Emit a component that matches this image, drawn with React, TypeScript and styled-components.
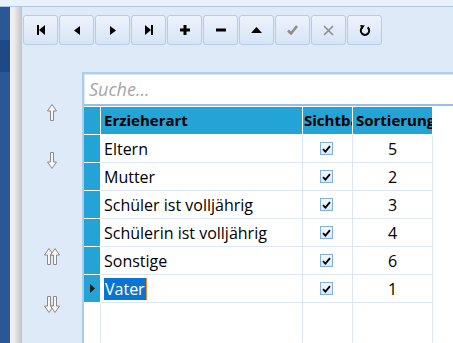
import React from "react"
import styled, { createGlobalStyle } from "styled-components"

const GlobalStyle = createGlobalStyle`
  html, body {
    margin: 0;
    padding: 0;
    background: #ffffff;
  }
  body {
    font-family: "Open Sans", "Noto Sans", sans-serif;
  }
`

const Window = styled.div`
  width: 453px;
  height: 343px;
  display: flex;
  flex-direction: column;
  overflow: hidden;
`

const TitleStrip = styled.div`
  height: 6px;
  flex: none;
  background: #e9f1fb;
  border-bottom: 1px solid #a9c7e6;
`

const Body = styled.div`
  flex: 1;
  display: flex;
  min-height: 0;
`

const NavStrip = styled.div`
  width: 10px;
  flex: none;
  background: linear-gradient(
    to bottom,
    #2b5797 0,
    #2b5797 33px,
    #1f4986 33px,
    #1f4986 65px,
    #2b5797 65px
  );
`

const Shade = styled.div`
  width: 12px;
  flex: none;
  background: linear-gradient(to right, #f2f2f2 0, #ececec 35%, #c3c3c3 100%);
`

const Panel = styled.div`
  flex: 1;
  display: flex;
  flex-direction: column;
  background: #dfeaf9;
  min-width: 0;
`

const Toolbar = styled.div`
  height: 65px;
  flex: none;
  display: flex;
  align-items: flex-start;
  gap: 1px;
  padding: 8px 0 0 1px;
  box-sizing: border-box;
`

const ToolButton = styled.button<{ $muted?: boolean }>`
  width: 35px;
  height: 30px;
  padding: 0;
  margin: 0;
  display: flex;
  align-items: center;
  justify-content: center;
  border: 1px solid #b6cce6;
  border-radius: 3px;
  background: linear-gradient(to bottom, #edf3fc 0%, #e2ecf8 50%, #d6e4f5 100%);
  color: ${(p) => (p.$muted ? "#8e8e8e" : "#000000")};
`

const Lower = styled.div`
  flex: 1;
  display: flex;
  min-height: 0;
`

const MoveColumn = styled.div`
  width: 60px;
  flex: none;
  display: flex;
  flex-direction: column;
  align-items: center;
  padding-top: 32px;
  box-sizing: border-box;
`

const MoveIcon = styled.div<{ $gap: number }>`
  height: 17px;
  margin-bottom: ${(p) => p.$gap}px;
  display: flex;
  align-items: center;
  justify-content: center;
`

const ListArea = styled.div`
  flex: 1;
  display: flex;
  flex-direction: column;
  background: #ffffff;
  border-left: 2px solid #a9cdef;
  min-width: 0;
`

const Search = styled.div`
  height: 34px;
  flex: none;
  box-sizing: border-box;
  border-top: 2px solid #aed0ef;
  border-bottom: 2px solid #98bdf0;
  box-shadow: inset 1px 1px 0 #d8e8f8;
  display: flex;
  align-items: center;
  padding-left: 5px;
  font-size: 18px;
  font-style: italic;
  color: #a6a6a6;
`

const Grid = styled.div`
  margin-top: 1px;
  flex: 1;
  display: flex;
  flex-direction: column;
`

const Row = styled.div<{ $fill?: boolean }>`
  display: flex;
  height: ${(p) => (p.$fill ? "auto" : "28px")};
  flex: ${(p) => (p.$fill ? "1" : "none")};
`

const RowHead = styled.div<{ $blank?: boolean }>`
  width: 17px;
  flex: none;
  box-sizing: border-box;
  background: ${(p) => (p.$blank ? "#ffffff" : "#24a3d6")};
  border-right: 1px solid ${(p) => (p.$blank ? "#dbe7f5" : "#ffffff")};
  border-bottom: 1px solid ${(p) => (p.$blank ? "transparent" : "#ffffff")};
  display: flex;
  align-items: center;
  justify-content: center;
`

const HeadCell = styled.div<{ $w: number; $pad: number }>`
  width: ${(p) => p.$w}px;
  flex: none;
  box-sizing: border-box;
  background: #24a3d6;
  border-right: 1px solid #ffffff;
  border-bottom: 1px solid #ffffff;
  padding-left: ${(p) => p.$pad}px;
  font-size: 15px;
  font-weight: 700;
  line-height: 27px;
  color: #000000;
  white-space: nowrap;
  overflow: hidden;
`

const Cell = styled.div<{ $w: number; $align?: string; $blank?: boolean }>`
  width: ${(p) => p.$w}px;
  flex: none;
  box-sizing: border-box;
  border-right: 1px solid #dbe7f5;
  border-bottom: 1px solid ${(p) => (p.$blank ? "transparent" : "#dbe7f5")};
  padding-left: ${(p) => (p.$align === "center" ? 0 : 3)}px;
  display: flex;
  align-items: center;
  justify-content: ${(p) => (p.$align === "center" ? "center" : "flex-start")};
  font-size: 16px;
  color: #000000;
  white-space: nowrap;
  overflow: hidden;
`

const Selected = styled.span`
  background: #0a74d4;
  color: #ffffff;
  padding: 0 1px;
  line-height: 22px;
  border-right: 1px solid #f08a24;
`

const Check = styled.span`
  width: 13px;
  height: 13px;
  box-sizing: border-box;
  border: 1px solid #7fb0de;
  background: linear-gradient(to bottom, #f2f7fd, #dbe9f8);
  display: flex;
  align-items: center;
  justify-content: center;
  margin-left: -2px;
`

const columns = [
  { label: "Erzieherart", width: 202, pad: 3 },
  { label: "Sichtbar", width: 50, pad: 1 },
  { label: "Sortierung", width: 80, pad: 3 },
]

const rows = [
  { name: "Eltern", order: 5 },
  { name: "Mutter", order: 2 },
  { name: "Schüler ist volljährig", order: 3 },
  { name: "Schülerin ist volljährig", order: 4 },
  { name: "Sonstige", order: 6 },
  { name: "Vater", order: 1, current: true },
]

const FirstIcon = () => (
  <svg width="8" height="10" viewBox="0 0 8 10">
    <rect x="0" y="0" width="2" height="10" fill="currentColor" />
    <polygon points="8,0 2,5 8,10" fill="currentColor" />
  </svg>
)

const PrevIcon = () => (
  <svg width="6" height="9" viewBox="0 0 6 9">
    <polygon points="6,0 0,4.5 6,9" fill="currentColor" />
  </svg>
)

const NextIcon = () => (
  <svg width="6" height="9" viewBox="0 0 6 9">
    <polygon points="0,0 6,4.5 0,9" fill="currentColor" />
  </svg>
)

const LastIcon = () => (
  <svg width="8" height="10" viewBox="0 0 8 10">
    <polygon points="0,0 6,5 0,10" fill="currentColor" />
    <rect x="6" y="0" width="2" height="10" fill="currentColor" />
  </svg>
)

const PlusIcon = () => (
  <svg width="10" height="10" viewBox="0 0 10 10">
    <rect x="3.5" y="0" width="3" height="10" fill="currentColor" />
    <rect x="0" y="3.5" width="10" height="3" fill="currentColor" />
  </svg>
)

const MinusIcon = () => (
  <svg width="10" height="10" viewBox="0 0 10 10">
    <rect x="0" y="3.5" width="10" height="3" fill="currentColor" />
  </svg>
)

const UpIcon = () => (
  <svg width="11" height="6" viewBox="0 0 11 6">
    <polygon points="0,6 5.5,0 11,6" fill="currentColor" />
  </svg>
)

const SaveIcon = () => (
  <svg width="11" height="10" viewBox="0 0 11 10">
    <path d="M1 5.5 L4 8.5 L10 1" fill="none" stroke="currentColor" strokeWidth="2.6" />
  </svg>
)

const CancelIcon = () => (
  <svg width="11" height="11" viewBox="0 0 11 11">
    <path d="M1 1 L10 10 M10 1 L1 10" fill="none" stroke="currentColor" strokeWidth="1.6" />
  </svg>
)

const RefreshIcon = () => (
  <svg width="12" height="13" viewBox="0 0 12 13">
    <path
      d="M8.6 3.4 A4.2 4.2 0 1 1 3.4 3.4"
      fill="none"
      stroke="currentColor"
      strokeWidth="2"
    />
    <polygon points="1.2,1 6,1.6 2.6,5.6" fill="currentColor" />
  </svg>
)

const arrowUp = "5,0.5 9.5,7 6.5,7 6.5,16.5 3.5,16.5 3.5,7 0.5,7"
const arrowDown = "5,16.5 9.5,10 6.5,10 6.5,0.5 3.5,0.5 3.5,10 0.5,10"

const MoveArrow = ({ down, double }: { down?: boolean; double?: boolean }) => {
  const points = down ? arrowDown : arrowUp
  return (
    <svg width={double ? 16 : 10} height="17" viewBox={`0 0 ${double ? 16 : 10} 17`}>
      <polygon points={points} fill="#f7f7f7" stroke="#8a8a8a" strokeWidth="1" />
      {double && (
        <polygon
          points={points}
          transform="translate(6 0)"
          fill="#f7f7f7"
          stroke="#8a8a8a"
          strokeWidth="1"
        />
      )}
    </svg>
  )
}

const CheckMark = () => (
  <svg width="9" height="8" viewBox="0 0 9 8">
    <path d="M1 4.2 L3.4 6.6 L8 1.2" fill="none" stroke="#000000" strokeWidth="1.8" />
  </svg>
)

const CurrentMarker = () => (
  <svg width="5" height="9" viewBox="0 0 5 9">
    <polygon points="0,0 5,4.5 0,9" fill="#1a1a1a" />
  </svg>
)

const App = () => (
  <Window>
    <GlobalStyle />
    <TitleStrip />
    <Body>
      <NavStrip />
      <Shade />
      <Panel>
        <Toolbar>
          <ToolButton><FirstIcon /></ToolButton>
          <ToolButton><PrevIcon /></ToolButton>
          <ToolButton><NextIcon /></ToolButton>
          <ToolButton><LastIcon /></ToolButton>
          <ToolButton><PlusIcon /></ToolButton>
          <ToolButton><MinusIcon /></ToolButton>
          <ToolButton><UpIcon /></ToolButton>
          <ToolButton $muted><SaveIcon /></ToolButton>
          <ToolButton $muted><CancelIcon /></ToolButton>
          <ToolButton><RefreshIcon /></ToolButton>
        </Toolbar>
        <Lower>
          <MoveColumn>
            <MoveIcon $gap={31}><MoveArrow /></MoveIcon>
            <MoveIcon $gap={79}><MoveArrow down /></MoveIcon>
            <MoveIcon $gap={31}><MoveArrow double /></MoveIcon>
            <MoveIcon $gap={0}><MoveArrow down double /></MoveIcon>
          </MoveColumn>
          <ListArea>
            <Search>Suche...</Search>
            <Grid>
              <Row>
                <RowHead />
                {columns.map((c) => (
                  <HeadCell key={c.label} $w={c.width} $pad={c.pad}>
                    {c.label}
                  </HeadCell>
                ))}
              </Row>
              {rows.map((r) => (
                <Row key={r.name}>
                  <RowHead>{r.current && <CurrentMarker />}</RowHead>
                  <Cell $w={202}>
                    {r.current ? <Selected>{r.name}</Selected> : r.name}
                  </Cell>
                  <Cell $w={50} $align="center">
                    <Check><CheckMark /></Check>
                  </Cell>
                  <Cell $w={80} $align="center">{r.order}</Cell>
                </Row>
              ))}
              <Row $fill>
                <RowHead $blank />
                <Cell $w={202} $blank />
                <Cell $w={50} $blank />
                <Cell $w={80} $blank />
              </Row>
            </Grid>
          </ListArea>
        </Lower>
      </Panel>
    </Body>
  </Window>
)

export default App
